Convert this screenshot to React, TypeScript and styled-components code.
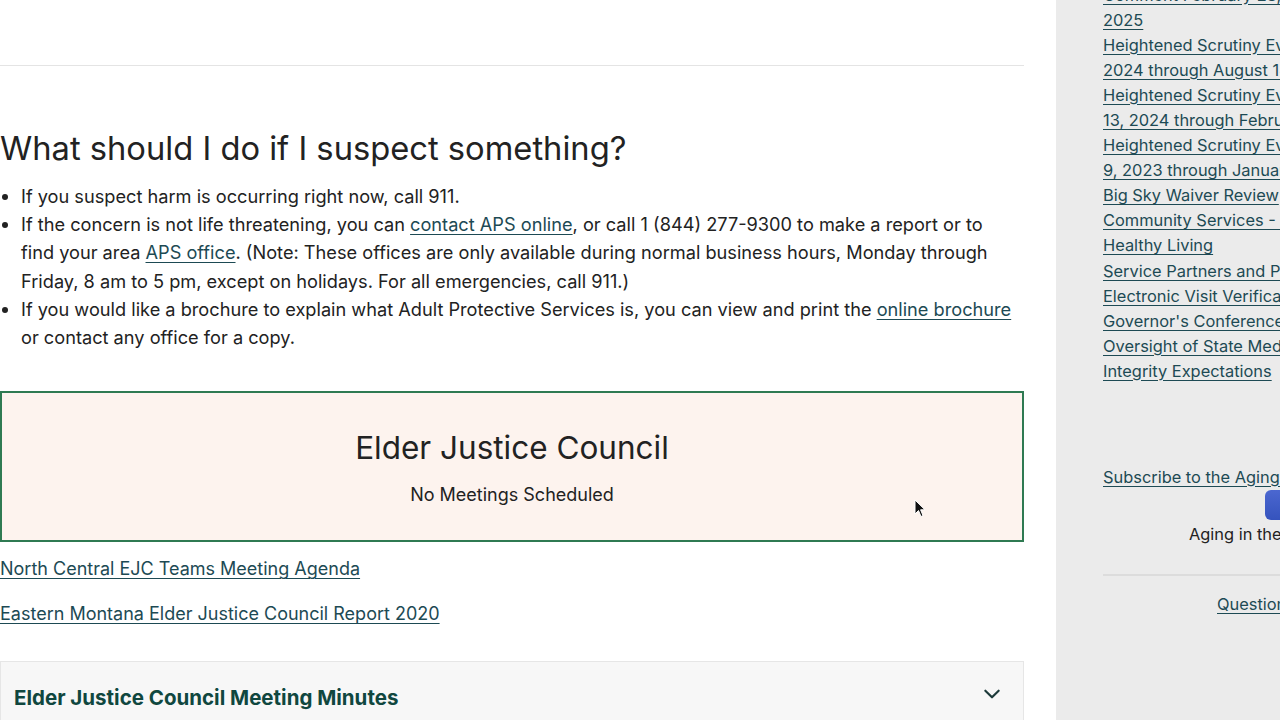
import React from "react";
import styled, { createGlobalStyle } from "styled-components";

const Global = createGlobalStyle`
  html, body { margin: 0; padding: 0; background: #fff; overflow: hidden; }
  body { font-family: Inter, "Noto Sans", Arial, sans-serif; color: #222; }
`;

const Page = styled.div`
  display: flex;
  width: 1280px;
  height: 720px;
  overflow: hidden;
  position: relative;
`;

const Main = styled.main`
  width: 1024px;
  padding-right: 32px;
  flex: none;
  background: #fff;
`;

const TopSection = styled.div`
  height: 65px;
  border-bottom: 1px solid #e4e4e4;
`;

const Heading = styled.h2`
  margin: 62px 0 13px;
  font-size: 32.7px;
  line-height: 41px;
  font-weight: 400;
  color: #222;
`;

const List = styled.ul`
  margin: 0;
  padding-left: 21px;
  font-size: 18.2px;
  line-height: 28.2px;
  color: #222;
`;

const Link = styled.a`
  color: #1d4a54;
  text-decoration: underline;
  text-underline-offset: 3px;
  text-decoration-thickness: 1px;
`;

const EventBox = styled.section`
  margin-top: 40px;
  height: 147px;
  border: 2px solid #2f7a52;
  background: #fdf3ee;
  display: flex;
  flex-direction: column;
  align-items: center;
  box-sizing: content-box;
`;

const EventTitle = styled.h3`
  margin: 35px 0 0;
  font-size: 31.5px;
  line-height: 40px;
  font-weight: 400;
  color: #222;
`;

const EventNote = styled.p`
  margin: 13px 0 0;
  font-size: 18px;
  line-height: 28px;
`;

const DocLink = styled.p<{ $gap: number }>`
  margin: ${(p) => p.$gap}px 0 0;
  font-size: 18px;
  line-height: 28px;
`;

const Accordion = styled.div`
  margin-top: 33px;
  background: #f7f7f7;
  border: 1px solid #e6e6e6;
  border-bottom: none;
  height: 80px;
  display: flex;
  align-items: flex-start;
  justify-content: space-between;
  padding: 22px 21px 0 13px;
`;

const AccordionTitle = styled.h4`
  margin: 0;
  font-size: 20.5px;
  line-height: 28px;
  font-weight: 700;
  color: #10473f;
`;

const Chevron = styled.svg`
  width: 20px;
  height: 20px;
  margin-top: 0;
`;

const Sidebar = styled.aside`
  flex: 1;
  background: #ebebeb;
  overflow: hidden;
`;

const SideInner = styled.div`
  width: 332px;
  padding-left: 47px;
  margin-top: -17.5px;
`;

const SideLinks = styled.div`
  display: flex;
  flex-direction: column;
  font-size: 16.4px;
  line-height: 25.1px;
  white-space: nowrap;
`;

const SideLink = styled.a`
  color: #1d4a54;
  text-decoration: underline;
  text-underline-offset: 3px;
`;

const Subscribe = styled.div`
  margin-top: 81px;
  font-size: 16.4px;
  line-height: 25px;
  white-space: nowrap;
`;

const ButtonRow = styled.div`
  margin-top: 0;
  padding-left: 162px;
  height: 30px;
`;

const BlueButton = styled.span`
  display: inline-block;
  width: 120px;
  height: 30px;
  border-radius: 6px;
  background: linear-gradient(180deg, #4b67d0 0%, #3553bd 100%);
`;

const SideText = styled.p<{ $indent: number }>`
  margin: 2px 0 0;
  padding-left: ${(p) => p.$indent}px;
  font-size: 16.4px;
  line-height: 25px;
  white-space: nowrap;
  color: #222;
`;

const SideRule = styled.hr`
  margin: 27px 0 0;
  border: none;
  border-top: 2px solid #dcdcdc;
`;

const QuestionLine = styled.p<{ $indent: number }>`
  margin: 16px 0 0;
  padding-left: ${(p) => p.$indent}px;
  font-size: 16.4px;
  line-height: 25px;
  white-space: nowrap;
`;

const Cursor = styled.svg`
  position: absolute;
  left: 914px;
  top: 499px;
  width: 12px;
  height: 19px;
`;

const sideItems: string[][] = [
  ["Comment February 28,", "2025"],
  ["Heightened Scrutiny Evaluations February 14,", "2024 through August 14, 2024"],
  ["Heightened Scrutiny Evaluations September", "13, 2024 through February 13, 2025"],
  ["Heightened Scrutiny Evaluations November", "9, 2023 through January 9, 2024"],
  ["Big Sky Waiver Review"],
  ["Community Services - Home"],
  ["Healthy Living"],
  ["Service Partners and Providers"],
  ["Electronic Visit Verification"],
  ["Governor's Conference on Aging"],
  ["Oversight of State Medicaid"],
  ["Integrity Expectations"],
];

export default function App() {
  return (
    <>
      <Global />
      <Page>
        <Main>
          <TopSection />
          <Heading>What should I do if I suspect something?</Heading>
          <List>
            <li>If you suspect harm is occurring right now, call 911.</li>
            <li>
              If the concern is not life threatening, you can <Link href="#">contact APS online</Link>, or call 1 (844)
              277-9300 to make a report or to
              <br />
              find your area <Link href="#">APS office</Link>. (Note: These offices are only available during normal
              business hours, Monday through
              <br />
              Friday, 8 am to 5 pm, except on holidays. For all emergencies, call 911.)
            </li>
            <li>
              If you would like a brochure to explain what Adult Protective Services is, you can view and print the{" "}
              <Link href="#">online brochure</Link>
              <br />
              or contact any office for a copy.
            </li>
          </List>
          <EventBox>
            <EventTitle>Elder Justice Council</EventTitle>
            <EventNote>No Meetings Scheduled</EventNote>
          </EventBox>
          <DocLink $gap={13}>
            <Link href="#">North Central EJC Teams Meeting Agenda</Link>
          </DocLink>
          <DocLink $gap={17}>
            <Link href="#">Eastern Montana Elder Justice Council Report 2020</Link>
          </DocLink>
          <Accordion>
            <AccordionTitle>Elder Justice Council Meeting Minutes</AccordionTitle>
            <Chevron viewBox="0 0 24 24" fill="none" stroke="#1d3a3a" strokeWidth="2.6" strokeLinecap="round" strokeLinejoin="round">
              <path d="M4 8l8 8 8-8" />
            </Chevron>
          </Accordion>
        </Main>
        <Sidebar>
          <SideInner>
            <SideLinks>
              {sideItems.map((lines, i) => (
                <SideLink href="#" key={i}>
                  {lines.map((l, j) => (
                    <React.Fragment key={j}>
                      {j > 0 && <br />}
                      {l}
                    </React.Fragment>
                  ))}
                </SideLink>
              ))}
            </SideLinks>
            <Subscribe>
              <SideLink href="#">Subscribe to the Aging in the Big Sky newsletter</SideLink>
            </Subscribe>
            <ButtonRow>
              <BlueButton />
            </ButtonRow>
            <SideText $indent={86}>Aging in the Big Sky</SideText>
            <SideRule />
            <QuestionLine $indent={114}>
              <SideLink href="#">Questions? Email us</SideLink>
            </QuestionLine>
          </SideInner>
        </Sidebar>
        <Cursor viewBox="0 0 12 19">
          <path d="M1 1 L1 15 L4.5 11.5 L7 17.5 L9 16.6 L6.6 10.8 L11 10.8 Z" fill="#111" stroke="#fff" strokeWidth="1" />
        </Cursor>
      </Page>
    </>
  );
}
